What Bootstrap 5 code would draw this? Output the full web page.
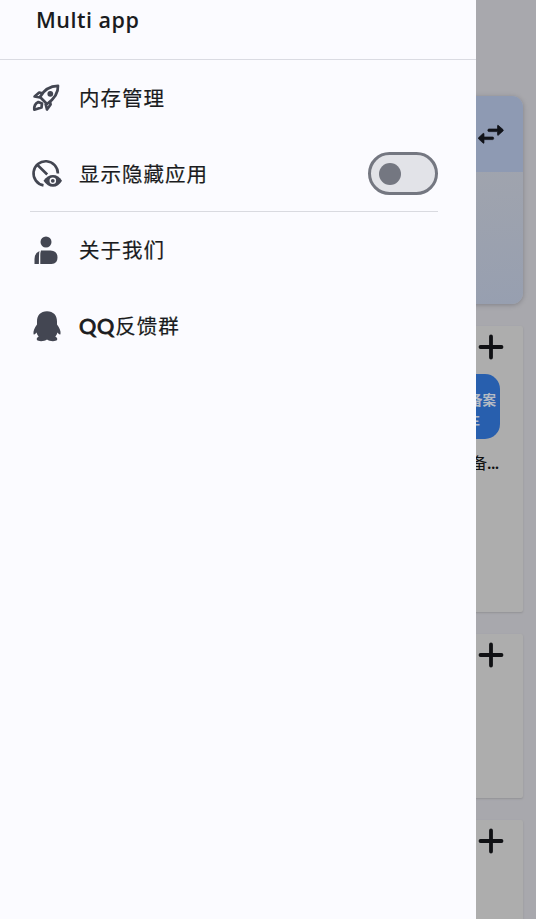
<!DOCTYPE html>
<html lang="zh-CN">
<head>
<meta charset="utf-8">
<meta name="viewport" content="width=device-width, initial-scale=1">
<title>Multi app</title>
<link href="https://cdn.jsdelivr.net/npm/bootstrap@5.3.0/dist/css/bootstrap.min.css" rel="stylesheet">
<style>
body{font-family:"Noto Sans","Noto Sans CJK SC",sans-serif;background:#a8a8ad;color:#1a1b20}
.screen{height:919px}
.home{padding:96px 12.6px 0 12px;gap:22px;height:919px}
.summary{height:208px;border-radius:11px;box-shadow:0 1px 5px #818187;background:linear-gradient(175deg,#a7a8ac,#979fb0)}
.summary-head{height:76px;background:#8e9ab3;padding-right:19px}
.panel{background:#adadad;box-shadow:0 1px 2px #919195;padding:8px 19.4px 0 0;border-radius:2px}
.panel-a{height:286px}.panel-b{height:164px}.panel-c{height:130px}
.tile{width:66px;height:65px;margin:14px 4px 0 0;border-radius:15px;background:#285fae;color:#b5bbc4;font-size:13.5px;font-weight:700;line-height:21px;padding:16px 4px 0 0}
.tile-second{padding-right:16px}
.tile-name{font-size:16px;line-height:20px;margin:14px 5px 0 0;color:#111}
.tile-dots{font-weight:700;font-size:14px}
.drawer{width:476px;background:#fbfbff}
.drawer-title{height:60px;border-bottom:1px solid #dadbe2;padding:5px 0 0 36px;font-family:"Open Sans",sans-serif;font-weight:600;font-size:21.5px;letter-spacing:.5px;line-height:30px}
.entry{height:76px;padding:0 38px 0 30px;gap:17px;font-size:20.5px;letter-spacing:.98px;line-height:30px;-webkit-text-stroke:.2px currentColor}
.entry-switch{height:75px}
.entry svg{width:32px;height:32px;color:#434652}
.rule{height:1px;margin:0 38px 0 30px;background:#d9dae0}
.toggle{width:70px;height:43px;border:3px solid #747781;border-radius:22px;background:#e2e3e8;padding-left:7.5px}
.toggle-knob{width:22px;height:22px;background:#747781}
.latin{font-family:Lato,sans-serif;font-weight:400;font-size:21.5px;letter-spacing:.9px;-webkit-text-stroke:.9px currentColor}
</style>
<script src="https://cdn.jsdelivr.net/npm/bootstrap@5.3.0/dist/js/bootstrap.bundle.min.js"></script>
</head>
<body>
<div class="screen position-relative overflow-hidden">
  <main class="home d-flex flex-column">
    <section class="summary overflow-hidden flex-shrink-0">
      <div class="summary-head d-flex align-items-center justify-content-end">
        <svg width="26" height="24" viewBox="0 0 26 24" fill="#111319" stroke="#111319" stroke-width=".7" stroke-linejoin="round"><path d="M11 7H19.500V4q0-1.200 1-.4l4.500 4q.8.700 0 1.400l-4.500 4q-1 .8-1-.4v-3H11Q9.800 9.600 9.800 8.300T11 7z"/><path d="M14.500 15H6V12q0-1.200-1-.4L.7 15.600q-.8.700 0 1.400L5 21q1 .8 1-.4v-3h8.500q1.200 0 1.200-1.300T14.500 15z"/></svg>
      </div>
    </section>
    <section class="panel panel-a d-flex flex-column align-items-end flex-shrink-0">
      <svg width="26" height="26" viewBox="0 0 26 26" stroke="#101114" stroke-width="3.800" stroke-linecap="round"><path d="M13 2.500v21M2.500 13h21"/></svg>
      <div class="tile text-end"><div>备案</div><div class="tile-second">车</div></div>
      <div class="tile-name">备<span class="tile-dots">...</span></div>
    </section>
    <section class="panel panel-b d-flex flex-column align-items-end flex-shrink-0">
      <svg width="26" height="26" viewBox="0 0 26 26" stroke="#101114" stroke-width="3.800" stroke-linecap="round"><path d="M13 2.500v21M2.500 13h21"/></svg>
    </section>
    <section class="panel panel-c d-flex flex-column align-items-end flex-shrink-0">
      <svg width="26" height="26" viewBox="0 0 26 26" stroke="#101114" stroke-width="3.800" stroke-linecap="round"><path d="M13 2.500v21M2.500 13h21"/></svg>
    </section>
  </main>

  <aside class="drawer position-absolute top-0 start-0 h-100">
    <div class="drawer-title">Multi app</div>
    <div class="entry d-flex align-items-center">
      <svg viewBox="0 0 32 32" fill="none" stroke="currentColor" stroke-width="2.700" stroke-linejoin="round"><path d="M10 15Q16 4 28 3.800Q28.500 14 17 22Z"/><circle cx="20.300" cy="11.800" r="2.900" fill="currentColor" stroke="none"/><path d="M12.500 11.300L9.200 10.500L4.600 14.500L10 15.500M20 19.500L20.600 22.500L17 27.500L15.500 21.500M8.300 20L12 21.500L11.500 25.500L4.300 27.700Q3.800 22 8.300 20Z"/></svg>
      <span>内存管理</span>
    </div>
    <div class="entry entry-switch d-flex align-items-center">
      <svg viewBox="0 0 32 32" fill="none" stroke="currentColor" stroke-width="2.600"><path d="M13.500 27.400A12.200 12.200 0 1 1 27.900 15.500M7.500 7L17.200 16.500"/><path d="M13.500 22.800Q17.500 17 23 17T32 22.800Q28.500 28.800 23 28.800T13.500 22.800Z" fill="currentColor" stroke="none"/><circle cx="22.800" cy="22.800" r="2.600" stroke="#fbfbff" stroke-width="1.400"/></svg>
      <span>显示隐藏应用</span>
      <div class="toggle d-flex align-items-center ms-auto"><div class="toggle-knob rounded-circle"></div></div>
    </div>
    <div class="rule"></div>
    <div class="entry d-flex align-items-center">
      <svg viewBox="0 0 32 32" fill="currentColor"><circle cx="16" cy="8" r="5.500"/><path d="M11 16.500H20.500Q27.500 17 27.500 23.500Q27.500 30 21.500 30H10.300V21Q10.300 18.500 11 16.500ZM9.500 17Q8.900 19 8.900 30H4.500V25Q4.500 19 9.500 17Z"/></svg>
      <span>关于我们</span>
    </div>
    <div class="entry d-flex align-items-center">
      <svg viewBox="0 0 32 32" fill="currentColor"><path d="M17 1.300C10.500 1.300 7 5.500 7 11.500V14.500C4.500 18 3 21 3.500 24Q4.200 25.500 6.500 22.500Q7.200 25 8.700 26.500Q6 28 6.800 29.800C8.500 32 14.500 31.500 17 29.500C19.500 31.500 25.500 32 27.200 29.800Q28 28 25.300 26.500Q26.800 25 27.500 22.500Q29.800 25.500 30.500 24C31 21 29.500 18 27 14.500V11.500C27 5.500 23.500 1.300 17 1.300Z"/></svg>
      <span><span class="latin">QQ</span>反馈群</span>
    </div>
  </aside>
</div>
</body>
</html>
